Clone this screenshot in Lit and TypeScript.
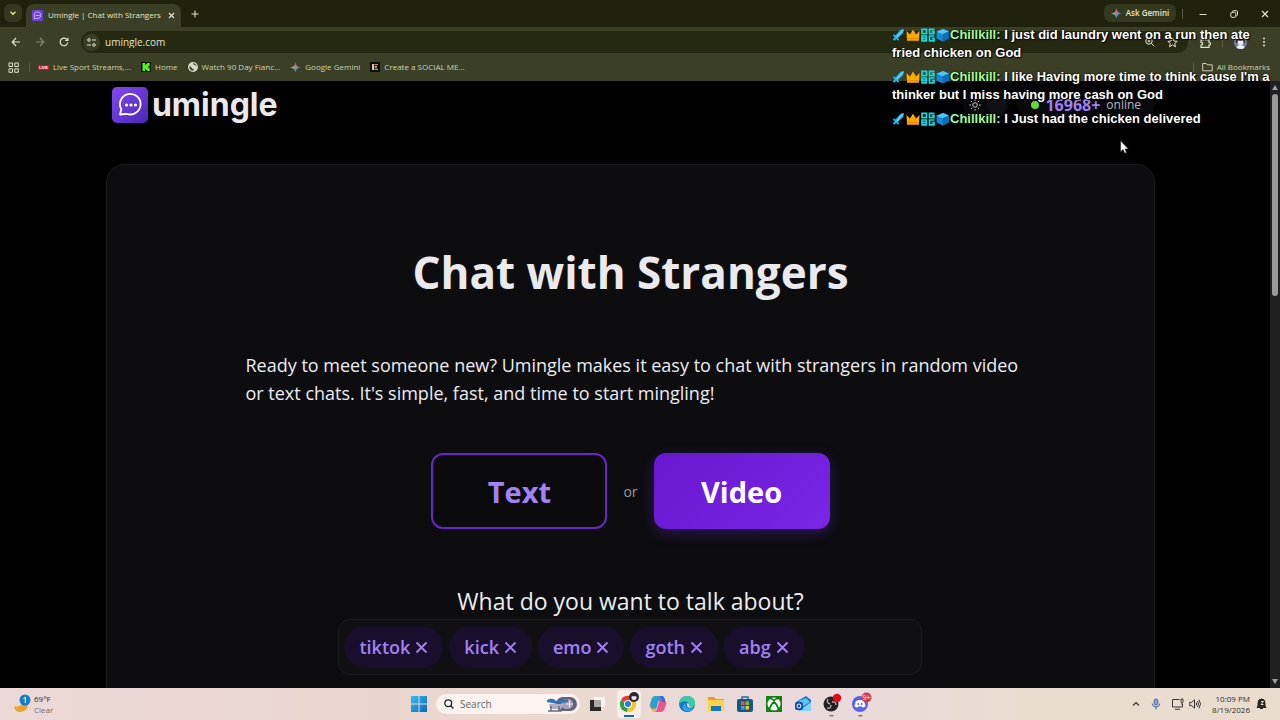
import { LitElement, html, svg, css } from "lit";
import { customElement, state } from "lit/decorators.js";

const spark = html`<svg class="i12 solid" viewBox="0 0 12 12"><path fill="#5a8df0" d="M6 .2C6.600 4 8 5.400 11.800 6 8 6.600 6.600 8 6 11.800 5.400 8 4 6.600.2 6 4 5.400 5.400 4 6 .2z"/><path fill="#e0655a" d="M6 .2c.4 2.400 1 3.800 2 4.700L6 6 4 4.900C5 4 5.600 2.600 6 .2z"/><path fill="#d8b545" d="M.2 6C2.600 5.600 3.600 5.200 4.400 4.500L6 6l-3 .8C2.300 6.500 1.400 6.200.2 6z"/><path fill="#4fb267" d="M1.800 6.300 6 6l-.3 4Q5 7 1.800 6.300z"/></svg>`;

const bubble = svg`<path d="M6.500 26.500 7.800 21.200A10.300 10.300 0 1 1 13.200 25.800z" fill="none" stroke="#fff" stroke-width="1.800" stroke-linejoin="round"/><circle cx="13" cy="17" r="1.600"/><circle cx="17.500" cy="17" r="1.600"/><circle cx="22" cy="17" r="1.600"/>`;

const badges = html`<svg class="badges" viewBox="0 0 57 14" aria-hidden="true">
  <path d="M12 1 8.500 1.800 3.500 7.500 2 6.200 1 7.500l1.600 1.800L.8 11.500 2.200 12.800 4.200 11l2 1.700 1-1.200-1.300-1.500L11.200 5z" fill="#27b5ec"/><path d="M11 2.200 5 8.800" stroke="#9be8ff" stroke-width="1"/>
  <path d="M14.500 3 18 6.500 21 1.500 24 6.500 27.500 3 27 12.800H15z" fill="#ffa900"/><path d="M15 10.500h12" stroke="#e18900" stroke-width="1"/>
  <g fill="none" stroke="#12d9df" stroke-width="1.700"><path d="M30 1.300h4.500v4.300H30zM42.500 1.300h-5v4.300H42V3.600H39.500M30 8h4.200v4.800H30zM30 10.400h4M42.500 8h-5v4.800H42v-2.300h-2.200"/></g>
  <path d="M44.500 3.800 51 1l6 2.500v7L50.500 13.500l-6-3z" fill="#1688d5"/><path d="M44.500 3.800 51 1l6 2.500-6.500 2.700z" fill="#49c9f5"/><path d="M50.500 6.200 57 3.500v7l-6.500 3z" fill="#0e6cb6"/></svg>`;

@customElement("browser-bar")
class BrowserBar extends LitElement {
  static styles = css`
    :host { display: block; background: #3b3f25; color: #e2e4c6; font: 8px/12px "Open Sans", "Noto Sans", sans-serif; }
    button, input { font: inherit; color: inherit; background: none; border: 0; padding: 0; margin: 0; outline: 0; }
    button { display: grid; place-items: center; }
    svg { display: block; fill: none; stroke: currentColor; }
    svg.solid { stroke: none; }
    .strip { height: 27px; background: #20220d; display: flex; align-items: flex-end; }
    .pick { width: 18px; height: 18px; border-radius: 6px; background: #343820; margin: 0 4px 5px; color: #e8f08a; }
    .tab { display: flex; align-items: center; gap: 5px; width: 155px; height: 23px; box-sizing: border-box; padding: 0 5px 1px 6px; background: #3b3f25; border-radius: 8px 8px 0 0; }
    .tab .name { flex: 1; white-space: nowrap; text-align: left; }
    .tab .close { width: 10px; }
    .plus { width: 28px; height: 27px; }
    .fill { flex: 1; }
    .ask { display: flex; gap: 4px; width: 72px; height: 18px; align-items: center; justify-content: center; margin: 0 6px 5px 0; border-radius: 7px; background: #353920; font-weight: 600; white-space: nowrap; }
    .i12 { width: 11px; height: 11px; flex: none; }
    .win { width: 31px; height: 27px; }
    .sep { width: 1px; height: 10px; background: #5b5e43; flex: none; }
    .strip .sep { align-self: center; margin-right: 4px; }
    .tools { height: 30px; display: flex; align-items: center; padding: 0 4px; }
    .tools > button { width: 24px; height: 22px; }
    .tools > .sep { margin: 0 5px; }
    .omni { flex: 1; display: flex; align-items: center; height: 22px; border-radius: 11px; background: #262912; margin: 0 5px; padding: 0 5px 0 2px; }
    .omni input { flex: 1; font-size: 10px; min-width: 0; margin-left: 5px; }
    .site { width: 17px; height: 17px; border-radius: 50%; background: #393c26; }
    .omni .act { width: 22px; }
    .marks { display: flex; align-items: center; padding: 2px 10px 6px 8px; box-sizing: border-box; height: 24px; }
    .marks a { display: flex; align-items: center; gap: 4px; color: #d0d2b2; text-decoration: none; white-space: nowrap; }
    .marks .sep { margin: 0 8px 0 10px; }
    .links { display: flex; gap: 10px; }
    .live { font: bold 4px/5px "Liberation Sans", sans-serif; color: #fff; background: #c7162b; padding: 0 1px; }
    .narrow { width: 11px; height: 11px; }
  `;
  render() {
    return html`
      <div class="strip">
        <button class="pick" aria-label="Search tabs"><svg width="8" height="8" viewBox="0 0 8 8"><path d="M1.500 2.800 4 5.300 6.500 2.800" stroke-width="1.300"/></svg></button>
        <div class="tab">
          <svg class="solid" width="11" height="11" viewBox="0 0 34 34"><rect width="34" height="34" rx="5" fill="#7040d8"/><g fill="#fff">${bubble}</g></svg>
          <span class="name">Umingle | Chat with Strangers</span>
          <button class="close" aria-label="Close tab"><svg width="7" height="7" viewBox="0 0 7 7"><path d="M1 1l5 5M6 1 1 6" stroke-width="1.200"/></svg></button>
        </div>
        <button class="plus" aria-label="New tab"><svg width="8" height="8" viewBox="0 0 8 8"><path d="M4 .5v7M.5 4h7" stroke-width="1.100"/></svg></button>
        <span class="fill"></span>
        <button class="ask">${spark}Ask Gemini</button><i class="sep"></i>
        <button class="win" aria-label="Minimise"><svg width="8" height="8" viewBox="0 0 8 8"><path d="M.5 4.500h7"/></svg></button>
        <button class="win" aria-label="Restore"><svg width="8" height="8" viewBox="0 0 8 8"><rect x=".8" y="2.300" width="5" height="5" rx="1"/><path d="M2.500 2V1.500Q2.500.7 3.500.7h3q1 0 1 1v3q0 1-1 1"/></svg></button>
        <button class="win" aria-label="Close"><svg width="8" height="8" viewBox="0 0 8 8"><path d="M1 1l6 6M7 1 1 7" stroke-width="1.200"/></svg></button>
      </div>
      <div class="tools">
        <button aria-label="Back"><svg width="10" height="10" viewBox="0 0 10 10"><path d="M9 5H1.500M5 1 1.200 5 5 9" stroke-width="1.200"/></svg></button>
        <button aria-label="Forward"><svg width="10" height="10" viewBox="0 0 10 10" opacity=".45"><path d="M1 5h7.500M5 1l3.800 4L5 9" stroke-width="1.200"/></svg></button>
        <button aria-label="Reload"><svg width="10" height="10" viewBox="0 0 10 10"><path d="M8.700 5.500A3.800 3.800 0 1 1 7.700 2.300L8.800 3.400M8.900.7v2.800H6.200" stroke-width="1.200"/></svg></button>
        <div class="omni">
          <button class="site" aria-label="Site information"><svg width="9" height="9" viewBox="0 0 9 9"><circle cx="2" cy="2" r="1.300"/><path d="M5 2h4M0 7h4"/><circle cx="7" cy="7" r="1.300"/></svg></button>
          <input aria-label="Address" value="umingle.com">
          <button class="act" aria-label="Zoom"><svg width="10" height="10" viewBox="0 0 10 10"><circle cx="4" cy="4" r="3.200"/><path d="M6.300 6.300 9.300 9.300M2.500 4h3M4 2.500v3"/></svg></button>
          <button class="act" aria-label="Bookmark"><svg width="11" height="11" viewBox="0 0 11 11"><path d="M5.500.9 6.900 4l3.300.3L7.700 6.500l.8 3.300-3-1.800-3 1.800.8-3.300L.8 4.300 4.100 4z"/></svg></button>
        </div>
        <button aria-label="Extensions"><svg width="11" height="11" viewBox="0 0 11 11"><path d="M1 3h2.500Q3 1 4.700 1T6 3h3v2.500q1.500-.2 1.500 1.200T9 8v2.300H1V8q1.700 0 1.700-1.300T1 5.400z" stroke-width="1.200"/></svg></button>
        <i class="sep"></i>
        <button aria-label="Profile"><svg class="solid" width="13" height="13" viewBox="0 0 13 13"><circle cx="6.500" cy="6.500" r="6.500" fill="#6d83a8"/><path d="M2 7Q1.500 1 6.500 1T11 7z" fill="#20202b"/><circle cx="6.500" cy="6" r="3" fill="#f6e7e8"/><path d="M3 4q3.500 1.500 7 0V3L6.500 1 3 3z" fill="#20202b"/><path d="M2.500 12Q3 9 6.500 9t4 3Q7 14 2.500 12z" fill="#f1f1fa"/></svg></button>
        <button aria-label="Menu"><svg class="solid" width="10" height="10" viewBox="0 0 10 10"><g fill="#e2e4c6"><circle cx="5" cy="1.500" r="1"/><circle cx="5" cy="5" r="1"/><circle cx="5" cy="8.500" r="1"/></g></svg></button>
      </div>
      <nav class="marks">
        <svg class="narrow" viewBox="0 0 11 11"><path d="M1 1h3.500v3.500H1zM6.800 1h3.500v3.500H6.800zM1 6.800h3.500v3.500H1zM6.800 6.800h3.500v3.500H6.800z"/></svg>
        <i class="sep"></i>
        <div class="links">
          <a href="#"><span class="live">LIVE</span>Live Sport Streams,...</a>
          <a href="#"><svg class="solid" width="10" height="10" viewBox="0 0 10 10"><rect width="10" height="10" fill="#061003"/><path fill="#50f51e" d="M1.500 1h2.700v2H5V2h1V1h2.700v2.700h-1v1h-.8v.6h.8v1h1V9H6V8H5V7h-.8v2H1.500z"/></svg>Home</a>
          <a href="#"><svg class="solid" width="10" height="10" viewBox="0 0 10 10"><circle cx="5" cy="5" r="5" fill="#d8d9cb"/><path d="M1 4.500Q3 4 3.500 5.500T6 7Q5.500 9 4 9 1.500 8 1 4.500zM5 1q0 2 1.500 2T9 4.500Q8.500 2 5 1z" fill="#45482f"/></svg>Watch 90 Day Fianc...</a>
          <a href="#">${spark}Google Gemini</a>
          <a href="#"><svg class="solid" width="10" height="10" viewBox="0 0 10 10"><rect width="10" height="10" fill="#0b0c08"/><path d="M2 2h2v6H2z" fill="#e3c6a5"/><path d="M4.500 2H8v1.300H4.500z" fill="#d97b6f"/><path d="M4.500 4.300H7v1.300H4.500z" fill="#d7d7d7"/><path d="M4.500 6.700H8V8H4.500z" fill="#73c274"/></svg>Create a SOCIAL ME...</a>
        </div>
        <span class="fill"></span><i class="sep"></i>
        <a href="#"><svg width="11" height="10" viewBox="0 0 11 10"><path d="M.7 1.500h3.500l1 1.300h5v6H.7z"/></svg>All Bookmarks</a>
      </nav>`;
  }
}

@customElement("task-bar")
class TaskBar extends LitElement {
  static styles = css`
    :host { display: grid; grid-template-columns: 1fr auto 1fr; align-items: center; height: 32px; background: linear-gradient(90deg, #ecd8d6, #ead5ce 30%, #ead9cf 45%, #ebd9dc 62%, #eaddd0 80%, #e9dccf); color: #302c2c; font: 8px/11px "Open Sans", "Noto Sans", sans-serif; }
    svg { display: block; }
    button, input { font: inherit; color: inherit; background: none; border: 0; padding: 0; outline: 0; }
    .weather { display: flex; gap: 2px; padding-left: 13px; align-items: center; text-align: left; justify-self: start; }
    .weather span { display: block; color: #756d6c; }
    .weather .deg { color: #302c2c; }
    .mid { display: flex; align-items: center; gap: 5px; }
    .app { width: 24px; height: 28px; display: grid; place-items: center; border-radius: 4px; }
    .search + .app { margin-right: 3px; }
    .on { background: #f8eeea; }
    .search { display: flex; align-items: center; height: 20px; width: 144px; box-sizing: border-box; border-radius: 10px; background: #faf3f0; padding: 0 2px 0 8px; gap: 6px; }
    .search input { flex: 1; min-width: 0; font-size: 10px; }
    .search input::placeholder { color: #666; opacity: 1; }
    .tray { display: flex; align-items: center; justify-self: end; gap: 11px; padding-right: 13px; }
    .vol { display: flex; gap: 5px; }
    .clock { display: flex; align-items: center; gap: 6px; text-align: right; }
  `;
  app(name: string, art: unknown, on = false) {
    return html`<button class="app ${on ? "on" : ""}" aria-label=${name}><svg width="22" height="26" viewBox="0 0 22 26">${art}</svg></button>`;
  }
  render() {
    return html`
      <button class="weather"><svg width="19" height="20" viewBox="0 0 19 20"><path d="M1 12q6 2 9-4l5 2q-1 8-8 8-5 0-6-6z" fill="#eda12d"/><circle cx="12" cy="6" r="5.500" fill="#147dc4"/><path d="M10.500 4.500 12.300 3.300V9" stroke="#fff" fill="none"/></svg><span><span class="deg">69°F</span><span>Clear</span></span></button>
      <div class="mid">
        ${this.app("Start", svg`<defs><linearGradient id="w" x2="1" y2="1"><stop stop-color="#35bdf0"/><stop offset="1" stop-color="#0868bd"/></linearGradient></defs><path fill="url(#w)" d="M3 5h7.500v7.500H3zM11.500 5H19v7.500h-7.500zM3 13.500h7.500V21H3zM11.500 13.500H19V21h-7.500z"/>`)}
        <label class="search"><svg width="10" height="10" viewBox="0 0 10 10" fill="none" stroke="#222" stroke-width="1.300"><circle cx="4.200" cy="4.200" r="3.400"/><path d="M6.700 6.700 9.500 9.500"/></svg><input placeholder="Search" aria-label="Search"><svg width="32" height="18" viewBox="0 0 32 18"><rect x="10" y="2" width="21" height="14" rx="7" fill="#64617a"/><rect x="15" y="4" width="12" height="10" rx="5" fill="#a5a0b5"/><path d="M1 5q6-3 9 1l12-2v3L11 9 1 7z" fill="#3173bd"/><path d="M3 9h15l-3 5H4z" fill="#b3b0bd"/><path d="M2 16h14M5 11v5M13 11v5" stroke="#666b83" stroke-width="1.500"/><path d="M20 9h7M23.500 5.500v7" stroke="#efedf7"/></svg></label>
        ${this.app("Task view", svg`<path d="M8 6h11v10H8z" fill="#f7f5f4"/><path d="M4 9h11v11H4z" fill="#2b2928"/><path d="M8 9h7v7H8z" fill="#aaa7a5"/>`)}
        ${this.app("Chrome", svg`<path d="M10 13 3 9A8 8 0 0 1 17 9z" fill="#e33b2e"/><path d="M10 13 3 9a8 8 0 0 0 6 12l3-6z" fill="#2ea14d"/><path d="M10 13h1l6-4a8 8 0 0 1-8 12z" fill="#f9c31f"/><circle cx="10" cy="13" r="4" fill="#fff"/><circle cx="10" cy="13" r="3" fill="#2878df"/><circle cx="16" cy="6" r="5" fill="#292733"/><circle cx="16" cy="6.500" r="2.500" fill="#f0e9e8"/><path d="M13.500 4.500h5" stroke="#292733" stroke-width="1.500"/><path d="M6 25h10" stroke="#0b6bb0" stroke-width="2"/>`, true)}
        ${this.app("Copilot", svg`<defs><linearGradient id="cp" x2="1" y2="1"><stop stop-color="#1687dc"/><stop offset=".33" stop-color="#44b9a0"/><stop offset=".55" stop-color="#f5b542"/><stop offset=".75" stop-color="#e65387"/><stop offset="1" stop-color="#9c50df"/></linearGradient></defs><path d="M8 5h7q2 0 2.500 2.500L18 10h-6.500L9 18.500Q8.500 20 7 20H5.500L4 17q-2-1-1-4l2-6q1-2 3-2z" fill="#2b9fd0"/><path d="M14 21H7q2 0 2.500-2L12 11q.5-2 2-2h2.500l1.500 1q2 1 1 4l-2 5q-1 2-3 2z" fill="#e8558f"/><path d="M3.500 14q-1 3 1 3.500H9L8 21H7q-2 0-2.500-2.500z" fill="#f2b13d"/><path d="M13 5h2q2 0 2.500 2.500L18.500 11H15z" fill="#4b62d8"/>`)}
        ${this.app("Edge", svg`<defs><linearGradient id="ed" x2="1" y2="1"><stop stop-color="#1793d7"/><stop offset="1" stop-color="#0c4e9f"/></linearGradient></defs><circle cx="11" cy="13" r="8" fill="url(#ed)"/><path d="M3 12Q5 5 11 5q8 0 8 8 0 4-6 3-2-1 0-3Q11 8 3 12z" fill="#41c9a6"/><path d="M10 12q-2 7 8 5-3 4-8 3t-3-5q1-3 3-3z" fill="#2ba6e8"/><path d="M11 12q2 0 2 2-1 2 5 2-6 2-7-1z" fill="#eadce0"/>`)}
        ${this.app("File Explorer", svg`<path d="M3 6h6l2 2h8v12H3z" fill="#e5a31b"/><path d="M3 9h16v11H3z" fill="#fdd24f"/><path d="M6 15h10v5H6z" fill="#1776bb"/>`)}
        ${this.app("Store", svg`<path d="M8 9V6h6v3" stroke="#1c6fa9" stroke-width="1.500" fill="none"/><rect x="3" y="8" width="16" height="13" rx="2" fill="#145983"/><path d="M7 10.500h3.500V14H7z" fill="#ed5837"/><path d="M11.500 10.500H15V14h-3.500z" fill="#80bd3b"/><path d="M7 15h3.500v3.500H7z" fill="#31a9e5"/><path d="M11.500 15H15v3.500h-3.500z" fill="#fbc22d"/>`)}
        ${this.app("Xbox", svg`<rect x="3" y="5" width="16" height="16" fill="#118112"/><circle cx="11" cy="13" r="6.500" fill="#fff"/><path d="M6.500 18Q8 13 11 11q3 2 4.500 7M7 7.500q2 0 4 2 2-2 4-2" stroke="#118112" fill="none" stroke-width="1.700"/>`)}
        ${this.app("Outlook", svg`<path d="M4 11 14 5l5 4v11H7z" fill="#1575c7"/><path d="M7 10 14 7l4 4-8 5z" fill="#5fc2f4"/><path d="m7 20 12-9v9z" fill="#83d2f7"/><rect x="3" y="11" width="8" height="8" rx="2" fill="#0e4f9e"/><circle cx="7" cy="15" r="2" fill="none" stroke="#fff"/>`)}
        ${this.app("OBS", svg`<circle cx="10" cy="13" r="7.500" fill="#222124"/><path d="M9 13q-4-1-2-5m4 3q4-1 4 3m-5 0q0 4-4 3" fill="none" stroke="#b8b5b9" stroke-width="1.300"/><circle cx="16" cy="7" r="4.200" fill="#e30a13"/><path d="M8.500 24.700h4" stroke="#777" stroke-width="1.500"/>`)}
        ${this.app("Discord", svg`<circle cx="10" cy="13" r="8" fill="#5865e9"/><path d="M6 10q4-2 8 0l1.500 5q-1 1.500-3 1.500L12 15.500H8l-.5 1q-2 0-3-1.500z" fill="#fff"/><circle cx="8.300" cy="13" r="1" fill="#5865e9"/><circle cx="11.700" cy="13" r="1" fill="#5865e9"/><circle cx="16.500" cy="6.500" r="5" fill="#d43b49"/><text x="12.500" y="9" font-size="7" fill="#fff">9+</text><path d="M8.500 24.700h4" stroke="#777" stroke-width="1.500"/>`)}
      </div>
      <div class="tray">
        <svg width="8" height="8" viewBox="0 0 8 8"><path d="M1 5.500 4 2.500 7 5.500" fill="none" stroke="#333" stroke-width="1.200"/></svg>
        <svg width="10" height="12" viewBox="0 0 10 12" fill="none" stroke="#4568aa"><rect x="3.200" y="1" width="3.600" height="6" rx="1.800" fill="#8ea4ca"/><path d="M1.300 5.500q0 3.500 3.700 3.500t3.700-3.500M5 9v2.500"/></svg>
        <div class="vol">
        <svg width="12" height="12" viewBox="0 0 12 12" fill="none" stroke="#3c3734"><path d="M7.500 1.500h-7v7.500h10V6M3 11.300h5M9 1v2.500q0 1.500 1 1.500t1-1.500V1zM10 5v2"/></svg>
        <svg width="12" height="12" viewBox="0 0 12 12" fill="none" stroke="#3c3734"><path d="M.8 4.300h2L5.500 1.800v8.400L2.800 7.700h-2zM7 4.500q1 1.500 0 3M8.500 3q2 3 0 6M10 1.700q3 4.300 0 8.600"/></svg></div>
        <div class="clock"><span>10:09 PM<br>8/19/2026</span>
        <svg width="11" height="12" viewBox="0 0 11 12"><path d="M2 8V5q0-4 3.500-4T9 5v3l1 1.500H1zM4 10.500h3" fill="#2b2522" stroke="#2b2522"/><path d="M5 3.500h2.500L5 6.500h2.500" stroke="#eaddd0" fill="none"/></svg></div>
      </div>`;
  }
}

@customElement("app-root")
class AppRoot extends LitElement {
  static styles = css`
    :host { display: flex; flex-direction: column; height: 100vh; position: relative; overflow: hidden; background: #000; color: #ececf1; font-family: "Open Sans", "Noto Sans", sans-serif; }
    browser-bar, task-bar { flex: none; }
    button, input { font: inherit; color: inherit; outline: 0; }
    svg { display: block; }
    .view { flex: 1; min-height: 0; display: flex; }
    .page { flex: 1; overflow: hidden; padding: 0 9px 0 0; }
    .wrap { width: 83.2%; margin: 0 auto; }
    .top { display: flex; align-items: center; height: 47px; padding: 0 0 0 6px; gap: 8px; }
    .brand { display: flex; align-items: center; gap: 4px; color: #e9e9ec; text-decoration: none; font: 700 32px/36px Inter, sans-serif; flex: 1; }
    .toggle { display: flex; align-items: center; width: 46px; height: 24px; border-radius: 12px; background: #09090b; color: #c9c9cd; box-sizing: border-box; padding-left: 6px; }
    .toggle input { appearance: none; margin: 0 0 0 6px; width: 20px; height: 20px; border-radius: 10px; background: #111115; }
    .online { display: flex; align-items: center; gap: 6px; height: 24px; box-sizing: border-box; padding: 0 14px; border-radius: 12px; background: #09090b; color: #b4b4bc; font-size: 12px; white-space: nowrap; }
    .online i { width: 8px; height: 8px; border-radius: 50%; background: #62d83a; }
    .online b { color: #a080f5; font-size: 16px; line-height: 20px; }
    .card { margin-top: 36px; background: #0d0d0f; border: 1px solid #1b1b20; border-radius: 18px; padding: 75px 0 80px; display: flex; flex-direction: column; align-items: center; }
    h1 { margin: 0; font-size: 44px; line-height: 64px; font-weight: 700; color: #eaeaee; text-align: center; }
    .lead { margin: 47px 0 0; width: 798px; max-width: 90%; box-sizing: border-box; padding-left: 14px; font-size: 18px; line-height: 28px; }
    .modes { display: flex; align-items: center; gap: 16px; margin-top: 46px; }
    .modes button { width: 176px; height: 76px; border-radius: 12px; border: 2px solid #6c24c5; background: #0b0b0d; color: #a482f5; font-size: 29px; font-weight: 700; }
    .modes .video { border: 0; color: #fff; background: linear-gradient(135deg, #6a17d0, #7926e6); box-shadow: 0 4px 14px #6d28d955; }
    .modes span { color: #97979e; font-size: 14px; }
    h2 { margin: 54px 0 0; font-size: 23px; line-height: 36px; font-weight: 400; }
    .tags { width: 584px; max-width: 90%; height: 56px; box-sizing: border-box; border: 1px solid #1c1c22; border-radius: 12px; background: #101013; display: flex; align-items: center; gap: 6px; padding: 0 5px; }
    .tag { display: flex; align-items: center; gap: 5px; height: 42px; padding: 0 15px; border-radius: 21px; background: #190f2d; color: #a482f5; font-size: 18px; font-weight: 600; }
    .tag button { background: none; border: 0; padding: 0; }
    .tags input { flex: 1; min-width: 0; border: 0; background: none; }
    .scroll { width: 10px; background: #202022; display: flex; flex-direction: column; align-items: center; padding: 4px 0; box-sizing: border-box; gap: 4px; }
    .thumb { width: 6px; height: 202px; border-radius: 3px; background: #99999b; }
    .gap { flex: 1; }
    .chat { position: absolute; top: 26px; right: 8px; width: 380px; display: flex; flex-direction: column; gap: 6px; font: bold 13px/18px "Liberation Sans", Arial, sans-serif; color: #fff; text-shadow: 0 0 2px #000, 1px 1px 1px #000; }
    .chat p { margin: 0; }
    .chat b { color: #a6f99a; }
    .badges { display: inline-block; width: 57px; height: 14px; vertical-align: -3px; margin-right: 1px; }
    .pointer { position: absolute; left: 1120px; top: 140px; }
  `;
  @state() tags = ["tiktok", "kick", "emo", "goth", "abg"];
  messages = ["I just did laundry went on a run then ate fried chicken on God", "I like Having more time to think cause I'm a thinker but I miss having more cash on God", "I Just had the chicken delivered"];
  drop(t: string) { this.tags = this.tags.filter((x) => x !== t); }
  render() {
    return html`
      <browser-bar></browser-bar>
      <div class="view">
        <main class="page"><div class="wrap">
          <header class="top">
            <a class="brand" href="#"><svg width="36" height="36" viewBox="0 0 36 36"><defs><linearGradient id="lg" x2="1" y2="1"><stop stop-color="#8249f2"/><stop offset="1" stop-color="#4c27b4"/></linearGradient></defs><rect width="36" height="36" rx="5" fill="url(#lg)"/><g fill="#fff" transform="translate(1.500 1)">${bubble}</g></svg>umingle</a>
            <label class="toggle"><svg width="12" height="12" viewBox="0 0 12 12" fill="none" stroke="currentColor"><circle cx="6" cy="6" r="2.300"/><path d="M6 .3v1.700M6 10v1.700M.3 6H2M10 6h1.700M2 2l1.200 1.200M8.800 8.800 10 10M10 2 8.800 3.200M3.200 8.800 2 10"/></svg><input type="checkbox" aria-label="Dark theme"></label>
            <div class="online"><i></i><b>16968+</b>online</div>
          </header>
          <section class="card">
            <h1>Chat with Strangers</h1>
            <p class="lead">Ready to meet someone new? Umingle makes it easy to chat with strangers in random video or text chats. It's simple, fast, and time to start mingling!</p>
            <div class="modes"><button>Text</button><span>or</span><button class="video">Video</button></div>
            <h2>What do you want to talk about?</h2>
            <div class="tags">
              ${this.tags.map((t) => html`<span class="tag">${t}<button aria-label="Remove ${t}" @click=${() => this.drop(t)}><svg width="13" height="13" viewBox="0 0 13 13"><path d="M1.500 1.500l10 10M11.500 1.500l-10 10" stroke="currentColor" stroke-width="1.800"/></svg></button></span>`)}
              <input aria-label="Add an interest">
            </div>
          </section>
        </div></main>
        <div class="scroll"><svg width="6" height="5" viewBox="0 0 6 5"><path d="M3 0 6 5H0z" fill="#a0a0a2"/></svg><div class="thumb"></div><div class="gap"></div><svg width="6" height="5" viewBox="0 0 6 5"><path d="M3 5 6 0H0z" fill="#a0a0a2"/></svg></div>
      </div>
      <task-bar></task-bar>
      <div class="chat">${this.messages.map((m) => html`<p>${badges}<b>Chillkill:</b> ${m}</p>`)}</div>
      <svg class="pointer" width="9" height="14" viewBox="0 0 9 14"><path d="M.6.8v11l2.500-2.300 1.600 3.800 1.800-.8L5 8.900h3.400z" fill="#fff" stroke="#222" stroke-width=".6"/></svg>`;
  }
}
